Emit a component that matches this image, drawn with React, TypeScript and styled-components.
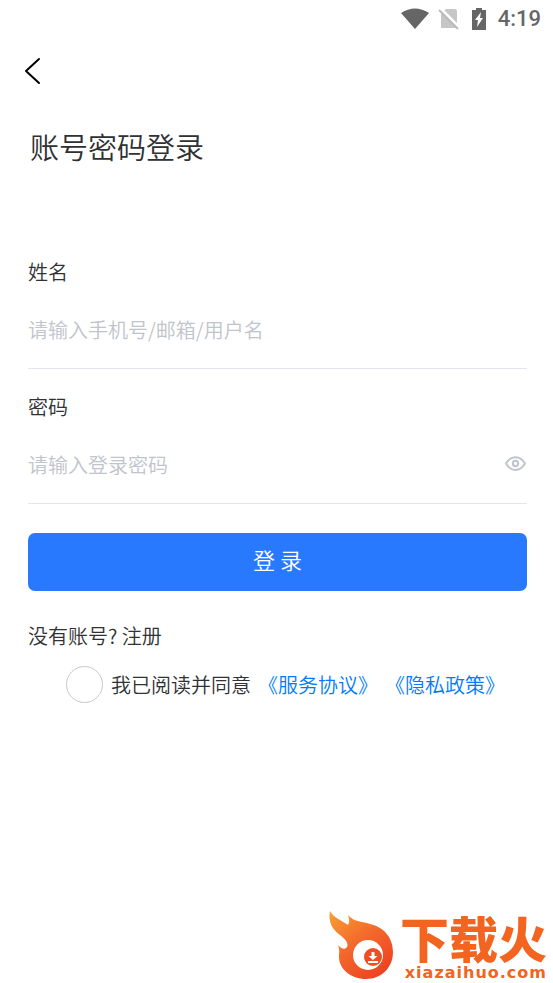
import React, { useState } from "react";
import styled, { createGlobalStyle } from "styled-components";

const GlobalStyle = createGlobalStyle`
  *, *::before, *::after { box-sizing: border-box; }
  body {
    margin: 0;
    background: #fff;
    color: #303133;
    font-family: "Noto Sans CJK SC", sans-serif;
    font-size: 20px;
    font-weight: 350;
    line-height: 30px;
  }
  input, button { font: inherit; color: inherit; }
`;

const Page = styled.div`
  display: flex;
  flex-direction: column;
  min-height: 100vh;
`;

const StatusBar = styled.header`
  display: flex;
  justify-content: flex-end;
  align-items: center;
  height: 38px;
  padding-right: 12px;
  color: #666;
`;

const WifiIcon = styled.svg`
  width: 28px;
  height: 22px;
  margin-right: 9px;
`;

const NoSimIcon = styled.svg`
  width: 22px;
  height: 22px;
  margin-right: 12px;
`;

const BatteryIcon = styled.svg`
  width: 14px;
  height: 24px;
  margin-right: 12px;
`;

const Clock = styled.time`
  font-family: Roboto, sans-serif;
  font-size: 22px;
  font-weight: 500;
  line-height: 24px;
`;

const NavBar = styled.nav`
  padding: 16px 18px;
`;

const BackButton = styled.button`
  display: flex;
  align-items: center;
  justify-content: center;
  width: 30px;
  height: 34px;
  padding: 0;
  border: 0;
  background: none;
  color: #000;
  cursor: pointer;
`;

const Form = styled.form`
  display: flex;
  flex-direction: column;
  padding: 0 26px 0 28px;
`;

const Title = styled.h1`
  margin: 20px 0 89px 2px;
  font-size: 29px;
  font-weight: 350;
  line-height: 44px;
`;

const Field = styled.div`
  display: flex;
  flex-direction: column;
  height: 112px;
  margin-bottom: 23px;
  border-bottom: 1px solid #e4e6ee;
`;

const FieldLabel = styled.label`
  display: block;
`;

const InputRow = styled.div`
  display: flex;
  align-items: center;
  margin-top: 22px;
`;

const TextInput = styled.input`
  flex: 1;
  min-width: 0;
  height: 40px;
  padding: 0;
  border: 0;
  outline: 0;
  background: none;
  &::placeholder { color: #c0c4cc; opacity: 1; }
`;

const EyeButton = styled.button`
  display: flex;
  width: 22px;
  height: 22px;
  padding: 0;
  border: 0;
  background: none;
  color: #c0c4cc;
  cursor: pointer;
`;

const SubmitButton = styled.button`
  height: 58px;
  margin-top: 6px;
  padding: 0 0 6px;
  border: 0;
  border-radius: 7px;
  background: #2979ff;
  color: #fff;
  font-size: 22px;
  cursor: pointer;
`;

const SignUp = styled.p`
  margin: 30px 0 0;
`;

const SignUpLink = styled.a`
  color: inherit;
  text-decoration: none;
`;

const Agreement = styled.div`
  display: flex;
  align-items: center;
  justify-content: center;
  margin-top: 15px;
  padding-left: 16px;
`;

const AgreeLabel = styled.label`
  display: flex;
  align-items: center;
  gap: 8px;
  margin-right: 7px;
`;

const RoundCheck = styled.input`
  appearance: none;
  width: 37px;
  height: 37px;
  margin: 0;
  border: 1px solid #c8c9cc;
  border-radius: 50%;
  background: #fff;
  cursor: pointer;
  &:checked { border-color: #2979ff; background: #2979ff; }
`;

const PolicyLink = styled.a`
  color: #007aff;
  text-decoration: none;
  & + & { margin-left: 7px; }
`;

const Brand = styled.footer`
  display: flex;
  justify-content: flex-end;
  align-items: flex-end;
  margin-top: auto;
  padding: 0 6px 2px 0;
  color: #f2641f;
`;

const FlameIcon = styled.svg`
  width: 66px;
  height: 72px;
`;

const BrandText = styled.div`
  display: flex;
  flex-direction: column;
  align-items: flex-end;
  gap: 4px;
  padding-left: 6px;
`;

const BrandName = styled.strong`
  font-size: 49px;
  font-weight: 900;
  line-height: 48px;
`;

const BrandSite = styled.span`
  font-family: "DejaVu Sans", sans-serif;
  font-size: 16px;
  font-weight: 700;
  line-height: 16px;
  letter-spacing: 1px;
`;

export default function App() {
  const [visible, setVisible] = useState(false);
  return (
    <>
      <GlobalStyle />
      <Page>
        <StatusBar>
          <WifiIcon viewBox="0 0 28 22" fill="currentColor" aria-hidden="true">
            <path d="M0 5Q14-4 28 5L14 21Z" />
          </WifiIcon>
          <NoSimIcon viewBox="0 0 22 22" aria-hidden="true">
            <path d="M8 1h9q2 0 2 2v17H3V6Z" fill="#c6c6c6" />
            <path d="M2 0l20 20" stroke="#fff" strokeWidth="3" />
            <path d="M1 2l19 19" stroke="#bbb" strokeWidth="2" />
          </NoSimIcon>
          <BatteryIcon viewBox="0 0 14 24" aria-hidden="true">
            <path d="M4 1h6v2h4v20H0V3h4Z" fill="currentColor" />
            <path d="M9 5L3 13h3l-1 7l6-9H8Z" fill="#fff" />
          </BatteryIcon>
          <Clock>4:19</Clock>
        </StatusBar>

        <NavBar>
          <BackButton type="button" aria-label="返回">
            <svg width="18" height="28" viewBox="0 0 18 28" fill="none" stroke="currentColor" strokeWidth="2" strokeLinecap="round" strokeLinejoin="round">
              <path d="M15 2L2 14L15 26" />
            </svg>
          </BackButton>
        </NavBar>

        <Form onSubmit={(e) => e.preventDefault()}>
          <Title>账号密码登录</Title>

          <Field>
            <FieldLabel htmlFor="account">姓名</FieldLabel>
            <InputRow>
              <TextInput id="account" type="text" placeholder="请输入手机号/邮箱/用户名" />
            </InputRow>
          </Field>

          <Field>
            <FieldLabel htmlFor="password">密码</FieldLabel>
            <InputRow>
              <TextInput id="password" type={visible ? "text" : "password"} placeholder="请输入登录密码" />
              <EyeButton type="button" aria-label="显示密码" onClick={() => setVisible(!visible)}>
                <svg width="22" height="22" viewBox="0 0 22 22" fill="none" stroke="currentColor" strokeWidth="2">
                  <path d="M1 10.5C6 2 15 2 20 10.5C15 19 6 19 1 10.5Z" />
                  <circle cx="10.5" cy="10.5" r="2.7" />
                </svg>
              </EyeButton>
            </InputRow>
          </Field>

          <SubmitButton type="submit">登 录</SubmitButton>

          <SignUp>
            没有账号? <SignUpLink href="#register">注册</SignUpLink>
          </SignUp>

          <Agreement>
            <AgreeLabel>
              <RoundCheck type="checkbox" />
              我已阅读并同意
            </AgreeLabel>
            <PolicyLink href="#terms">《服务协议》</PolicyLink>
            <PolicyLink href="#privacy">《隐私政策》</PolicyLink>
          </Agreement>
        </Form>

        <Brand>
          <FlameIcon viewBox="0 0 66 72" aria-hidden="true">
            <defs>
              <linearGradient id="flame" x1="0" y1="0" x2="0.7" y2="1">
                <stop offset="0" stopColor="#fb9f35" />
                <stop offset="0.5" stopColor="#f36a2b" />
                <stop offset="1" stopColor="#ee4323" />
              </linearGradient>
            </defs>
            <path d="M2 2C6 9 13 11 20 16C22 13 21 9 20 6C26 13 33 12 42 15C56 18 65 29 65 43C65 59 53 70 38 70C23 70 11 60 11 48C11 44 12 42 10 36C13 40 17 41 19 38C21 34 17 30 12 26C4 20 0 13 2 2Z" fill="url(#flame)" />
            <circle cx="40" cy="46" r="15" fill="#fff" />
            <circle cx="45" cy="48" r="9" fill="#f04d25" />
            <path d="M43.5 43h3v4h3l-4.500 4l-4.500-4h3ZM40 52h10v2H40Z" fill="#fff" />
          </FlameIcon>
          <BrandText>
            <BrandName>下载火</BrandName>
            <BrandSite>xiazaihuo.com</BrandSite>
          </BrandText>
        </Brand>
      </Page>
    </>
  );
}
